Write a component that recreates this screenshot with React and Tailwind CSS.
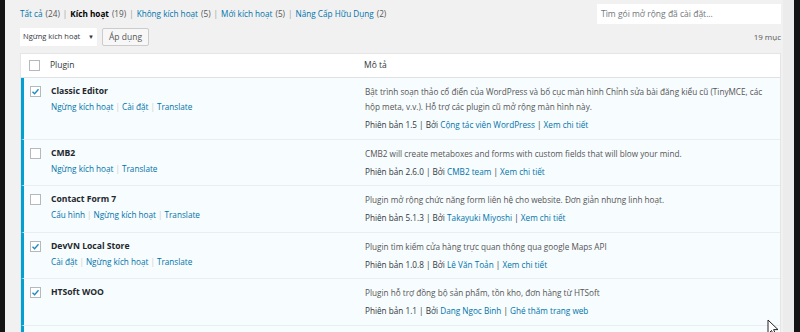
import React from 'react';

const plugins = [
    {
        name: 'Classic Editor',
        checked: true,
        actions: ['Ngừng kích hoạt', 'Cài đặt', 'Translate'],
        desc: 'Bật trình soạn thảo cổ điển của WordPress và bố cục màn hình Chỉnh sửa bài đăng kiểu cũ (TinyMCE, các hộp meta, v.v.). Hỗ trợ các plugin cũ mở rộng màn hình này.',
        version: '1.5',
        author: 'Cộng tác viên WordPress',
        more: 'Xem chi tiết',
    },
    {
        name: 'CMB2',
        checked: false,
        actions: ['Ngừng kích hoạt', 'Translate'],
        desc: 'CMB2 will create metaboxes and forms with custom fields that will blow your mind.',
        version: '2.6.0',
        author: 'CMB2 team',
        more: 'Xem chi tiết',
    },
    {
        name: 'Contact Form 7',
        checked: false,
        actions: ['Cấu hình', 'Ngừng kích hoạt', 'Translate'],
        desc: 'Plugin mở rộng chức năng form liên hệ cho website. Đơn giản nhưng linh hoạt.',
        version: '5.1.3',
        author: 'Takayuki Miyoshi',
        more: 'Xem chi tiết',
    },
    {
        name: 'DevVN Local Store',
        checked: true,
        actions: ['Cài đặt', 'Ngừng kích hoạt', 'Translate'],
        desc: 'Plugin tìm kiếm cửa hàng trực quan thông qua google Maps API',
        version: '1.0.8',
        author: 'Lê Văn Toản',
        more: 'Xem chi tiết',
    },
    {
        name: 'HTSoft WOO',
        checked: true,
        actions: [],
        desc: 'Plugin hỗ trợ đồng bộ sản phẩm, tồn kho, đơn hàng từ HTSoft',
        version: '1.1',
        author: 'Dang Ngoc Binh',
        more: 'Ghé thăm trang web',
    },
];

const filters = [
    { label: 'Tất cả', count: 24 },
    { label: 'Kích hoạt', count: 19, current: true },
    { label: 'Không kích hoạt', count: 5 },
    { label: 'Mới kích hoạt', count: 5 },
    { label: 'Nâng Cấp Hữu Dụng', count: 2 },
];

const Checkbox = ({ checked }) => (
    <span className="flex h-[11px] w-[11px] items-center justify-center border border-[#b4b9be] bg-white">
        {checked && (
            <svg viewBox="0 0 12 12" className="h-[9px] w-[9px]">
                <path d="M2 6.2 L4.8 9 L10 3" fill="none" stroke="#1e8cbe" strokeWidth="1.8" />
            </svg>
        )}
    </span>
);

const App = () => {
    return (
        <div className="relative flex h-[332px] w-[800px] overflow-hidden bg-[#f1f1f1] font-['Open_Sans',sans-serif] text-[8.2px] text-[#444]">
            <div className="w-[5px] bg-[#141414]" />
            <div className="w-[778px] pl-[15px] pr-[2px] pt-[4px]">
                <div className="flex h-[20px] items-center justify-between">
                    <div className="flex items-center text-[8.2px]">
                        {filters.map((f, i) => (
                            <span key={f.label} className="flex items-center">
                                {i > 0 && <span className="mx-[3px] text-[#999]">|</span>}
                                <span className={f.current ? 'font-bold text-black' : 'text-[#0073aa]'}>{f.label}</span>
                                <span className="ml-[3px] text-[#555]">({f.count})</span>
                            </span>
                        ))}
                    </div>
                    <div className="flex h-[20px] w-[184px] items-center bg-white px-[4px] text-[8.5px] text-[#72777c]">
                        Tìm gói mở rộng đã cài đặt...
                    </div>
                </div>

                <div className="mt-[4px] flex h-[18px] items-center justify-between">
                    <div className="flex items-center gap-[5px]">
                        <div className="flex h-[18px] w-[77px] items-center justify-between bg-white px-[3px] text-[7.5px] text-[#32373c]">
                            <span>Ngừng kích hoạt</span>
                            <span className="text-[6px]">▼</span>
                        </div>
                        <div className="flex h-[18px] items-center rounded-[2px] border border-[#ccc] bg-[#f7f7f7] px-[6px] text-[8.5px] text-[#555]">
                            Áp dụng
                        </div>
                    </div>
                    <span className="text-[8px] text-[#555]">19 mục</span>
                </div>

                <div className="mt-[7px] border border-[#e5e5e5] bg-white">
                    <div className="flex h-[24px] items-center border-b border-[#e1e1e1] text-[8.5px] text-[#32373c]">
                        <div className="w-[29px] pl-[8px]">
                            <Checkbox />
                        </div>
                        <div className="w-[305px]">Plugin</div>
                        <div className="flex-1 pl-[9px]">Mô tả</div>
                    </div>

                    {plugins.map((p) => (
                        <div key={p.name} className="flex border-b border-l-[3px] border-b-[#e8eef1] border-l-[#00a0d2] bg-[#f7fcfe] pb-[6.6px] pt-[6px] leading-[15px]">
                            <div className="w-[27px] pl-[6px] pt-[2px]">
                                <Checkbox checked={p.checked} />
                            </div>
                            <div className="w-[305px]">
                                <div className="text-[8.6px] font-bold text-[#23282d]">{p.name}</div>
                                {p.actions.length > 0 && (
                                    <div className="flex items-center text-[8.2px] text-[#0073aa]">
                                        {p.actions.map((a, i) => (
                                            <span key={a} className="flex items-center">
                                                {i > 0 && <span className="mx-[2px] text-[#ccc]">|</span>}
                                                {a}
                                            </span>
                                        ))}
                                    </div>
                                )}
                            </div>
                            <div className="flex-1 pl-[9px] pr-[16px]">
                                <div className="text-[#555]">{p.desc}</div>
                                <div className="mt-[3px] text-[#32373c]">
                                    Phiên bản {p.version} | Bởi <span className="text-[#0073aa]">{p.author}</span> |{' '}
                                    <span className="text-[#0073aa]">{p.more}</span>
                                </div>
                            </div>
                        </div>
                    ))}
                    <div className="h-[30px] border-l-[3px] border-l-[#00a0d2] bg-[#f7fcfe]" />
                </div>
            </div>
            <div className="w-[11px] bg-[#ececec]" />
            <div className="w-[6px] bg-[#141414]" />

            <svg viewBox="0 0 12 18" className="absolute left-[767px] top-[319px] h-[18px] w-[12px]">
                <path d="M1 1 L1 15 L4.5 11.5 L7 17 L9 16 L6.6 10.6 L11 10.6 Z" fill="white" stroke="#222" strokeWidth="1" />
            </svg>
        </div>
    );
};

export default App;
